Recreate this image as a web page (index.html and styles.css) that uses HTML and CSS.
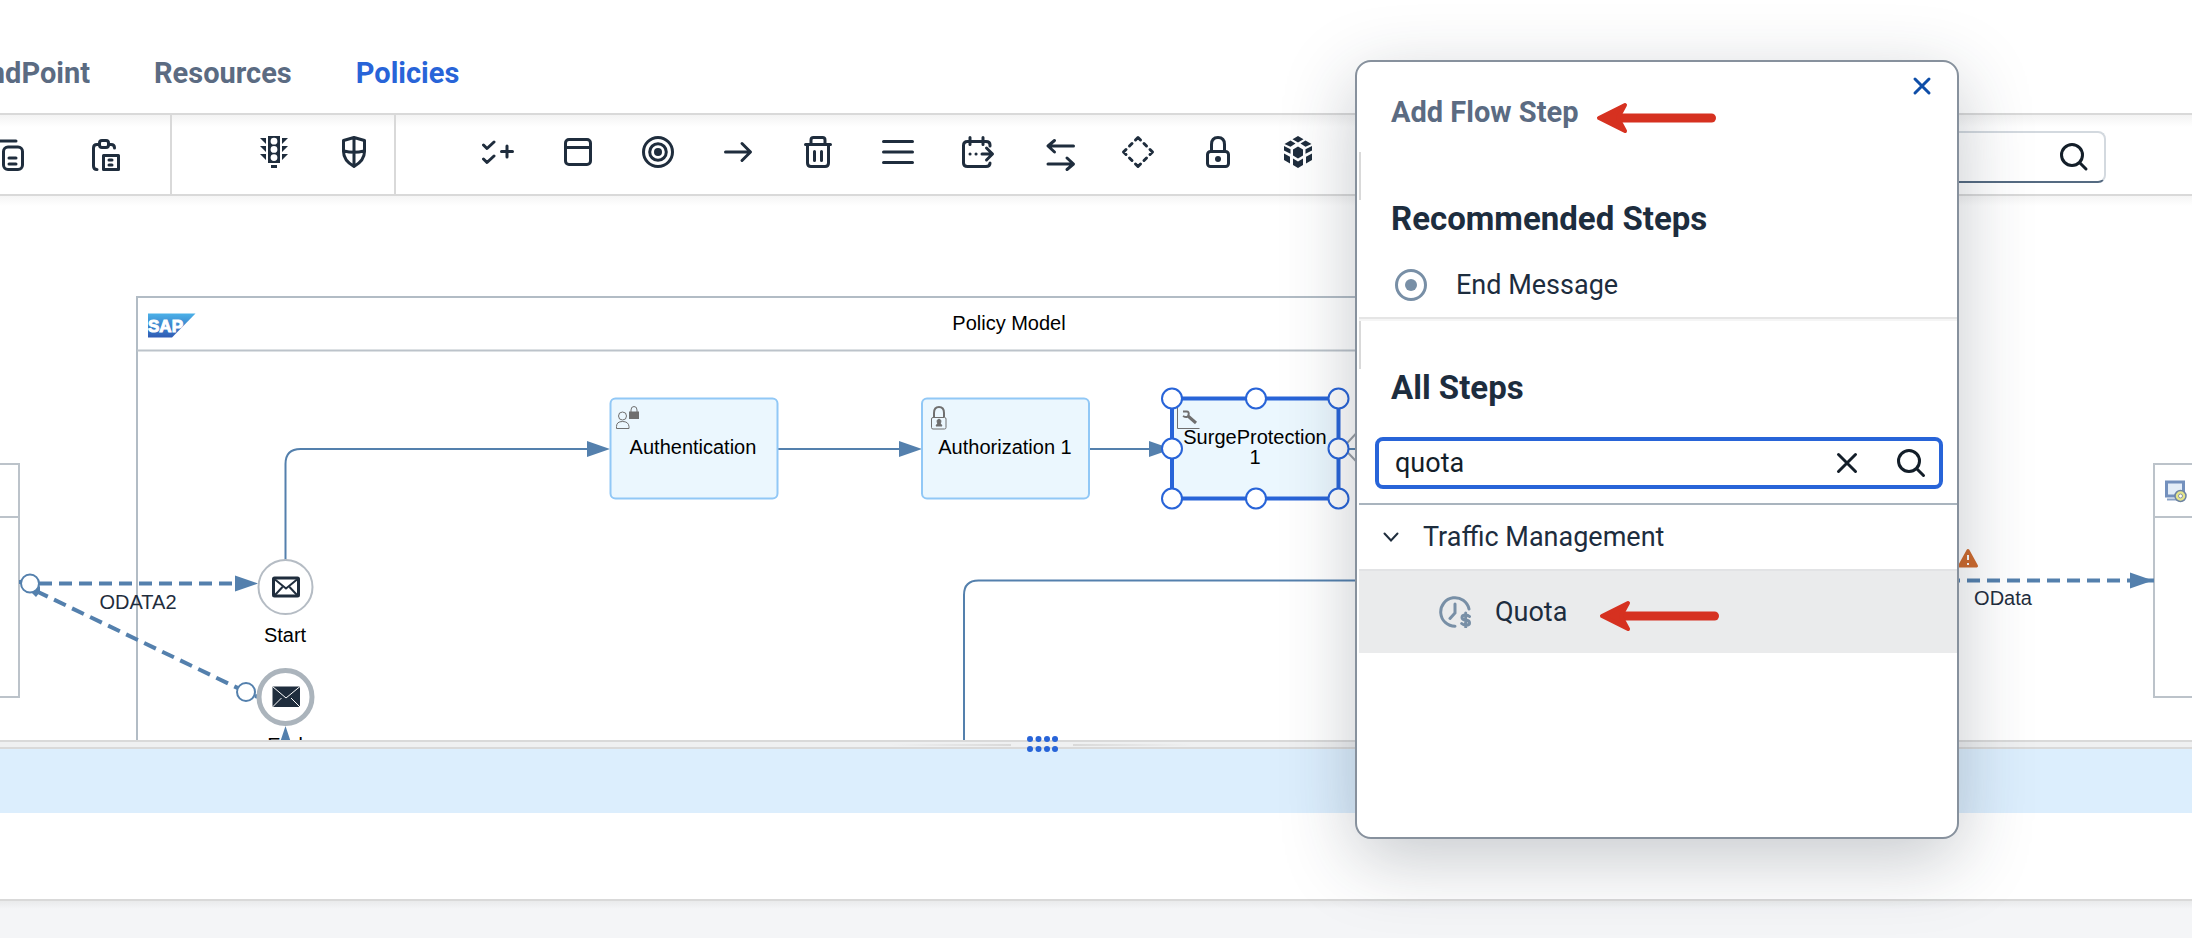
FILE: index.html
```html
<!DOCTYPE html>
<html lang="en">
<head>
<meta charset="utf-8">
<title>Policy Editor</title>
<link rel="stylesheet" href="styles.css">
</head>
<body>
<div class="app">
  <nav class="tabs" aria-label="Sections">
    <a class="tab tab-clipped" href="#endpoint"><span>EndPoint</span></a>
    <a class="tab" href="#resources">Resources</a>
    <a class="tab tab-active" href="#policies" aria-current="page">Policies</a>
  </nav>

  <div class="toolbar" role="toolbar" aria-label="Flow tools">
    <div class="group group-clipboard">
      <button class="tool" aria-label="Copy"><svg viewBox="0 0 32 32"><path d="M2 13V7q0-5 5-5h17"/><rect x="11.500" y="8" width="19" height="22.500" rx="4.500"/><path d="M17 19h7M17 25h7"/></svg></button>
      <button class="tool" aria-label="Paste"><svg viewBox="0 0 32 32"><path d="M7 30.500q-3.500 0-3.500-3.500V9q0-3.500 3.500-3.500h2M19 5.500h2q3.500 0 3.500 3.500"/><rect x="9.500" y="1.500" width="9" height="7" rx="2.500"/><path d="M13.500 16.500h15v14h-15zM19 21h3M19 26h3"/></svg></button>
    </div>
    <div class="group">
      <button class="tool" aria-label="Traffic policies"><svg class="fill" viewBox="0 0 32 32"><path fill-rule="evenodd" d="M10 0h12v27H10zM16 1.800a3.400 3.400 0 1 0 0 6.800a3.400 3.400 0 1 0 0-6.800M16 10a3.400 3.400 0 1 0 0 6.800a3.400 3.400 0 1 0 0-6.800M16 18.200a3.400 3.400 0 1 0 0 6.800a3.400 3.400 0 1 0 0-6.800M2 2h6v6zM2 10h6v6zM2 18h6v6zM30 2h-6v6zM30 10h-6v6zM30 18h-6v6zM13 29h6v3h-6z"/></svg></button>
      <button class="tool" aria-label="Security policies"><svg viewBox="0 0 32 32"><path d="M16 1.500l10.500 3v11q0 9-10.500 15q-10.500-6-10.500-15v-11zM16 2v28M6 15q10 2.500 20 0"/></svg></button>
    </div>
    <div class="group group-steps">
      <button class="tool" aria-label="Add checks"><svg viewBox="0 0 32 32"><path d="M1.500 9L5 12.500 12 6M1.500 23L5 26.500 12 20M19.500 15.500h11M25 10v11"/></svg></button>
      <button class="tool" aria-label="Pool"><svg viewBox="0 0 32 32"><rect x="3.500" y="3.500" width="25" height="25" rx="3.500"/><path d="M4 11.500h24"/></svg></button>
      <button class="tool" aria-label="Event"><svg viewBox="0 0 32 32"><circle cx="16" cy="16" r="14.500"/><circle cx="16" cy="16" r="8.300"/><circle class="dot" cx="16" cy="16" r="4"/></svg></button>
      <button class="tool" aria-label="Connector"><svg viewBox="0 0 32 32"><path d="M3.500 16h24M20 7.500l8.500 8.500-8.500 8.500"/></svg></button>
      <button class="tool" aria-label="Delete"><svg viewBox="0 0 32 32"><path d="M3.500 8.500h25M9 8.500V4q0-2.500 2.500-2.500h9q2.500 0 2.500 2.500v4.500M5.500 9v18q0 3.500 3.500 3.500h14q3.500 0 3.500-3.500V9M12.500 15.500v9M19.500 15.500v9"/></svg></button>
      <button class="tool" aria-label="List"><svg viewBox="0 0 32 32"><path d="M1.500 5.500h29M1.500 16h29M1.500 26.500h29"/></svg></button>
      <button class="tool" aria-label="Schedule"><svg viewBox="0 0 32 32"><path d="M28 10v-1q0-3.500-4-3.500H5.500q-4 0-4 4V27q0 3.500 4 3.500H24q4 0 4-3.500M8 1.500v7M21 1.500v7M8 18h.1M14 18h.1M20 18h10M24.500 12l6 6-6 6"/></svg></button>
      <button class="tool" aria-label="Exchange"><svg viewBox="0 0 32 32"><path d="M31.500 10H6.500M12.500 4.500L6 10l6.500 6M6 28h25M25 22l6.500 6-6.500 5.500"/></svg></button>
      <button class="tool" aria-label="Gateway"><svg viewBox="0 0 32 32"><path d="M13.500 4L16 1.500 18.500 4M28 13.500l2.500 2.500-2.500 2.500M18.500 28L16 30.500 13.500 28M4 18.500L1.500 16 4 13.500M10 7.500L7.500 10M22 7.500l2.500 2.500M22 24.500l2.500-2.500M10 24.500L7.500 22"/></svg></button>
      <button class="tool" aria-label="Lock"><svg viewBox="0 0 32 32"><rect x="5.500" y="15.500" width="21" height="15" rx="3"/><path d="M9.500 15V8.500q0-7 6.500-7t6.500 7V15"/><circle class="dot" cx="16" cy="23" r="3"/></svg></button>
      <button class="tool" aria-label="Integration"><svg class="fill" viewBox="0 0 32 32"><path d="M16 0l5.500 3.200L16 6.500 10.500 3.200zM8.500 4.500l5 3-5 3.200L2.500 8zM23.500 4.500l-5 3 5 3.200L29.500 8zM16 10.500l5 3v6L16 22.500l-5-3v-6zM2 10l6.500 3.200v4.500L2 14.500zM30 10l-6.500 3.200v4.500L30 14.500zM2 17.500l6 3.200v6.800L2 24zM30 17.500l-6 3.200v6.800L30 24zM11 22.500l5 3 5-3v6.500L16 32l-5-3z"/></svg></button>
    </div>
    <label class="search">
      <input type="search" aria-label="Search">
      <svg viewBox="0 0 32 32"><circle cx="14" cy="14" r="10.500"/><path d="M22 22l6 6"/></svg>
    </label>
  </div>

  <main class="canvas">
    <svg class="diagram" role="img" aria-label="Policy flow diagram">
      <defs>
        <linearGradient id="logo" x1="0" y1="0" x2="0" y2="1"><stop offset="0" stop-color="#4bb1e8"/><stop offset="1" stop-color="#2f5bb4"/></linearGradient>
      </defs>
      <g transform="translate(0 -196)">
        <g class="pool">
          <path d="M0 464H19V697H0M0 517H19"/>
          <path d="M2300 464H2154V697H2300M2154 517H2300"/>
          <path class="pool-main" d="M137 760V297H1900V760"/><path d="M137 350.500H1900"/>
        </g>
        <path fill="url(#logo)" d="M148 313.500h47.500L172 337.500H148z"/>
        <text class="logo-text" x="165.500" y="332">SAP</text>
        <text x="1009" y="330">Policy Model</text>

        <g class="flow">
          <path d="M285.500 560V464q0-15 15-15H590M778 449H900M1089 449H1150M1345 449h20M964 760V595q0-14.500 14.500-14.500H1400"/>
          <path class="dashed" d="M39 583.500H238"/>
          <path class="dashed" d="M246 692L34 590"/>
          <path class="dashed" d="M1947 580.500H2132"/>
          <path class="solid" d="M19 582l4 0M255 696l4 1M2146 580.500h8"/>
        </g>
        <g class="head">
          <path d="M587 441l23 8-23 8zM899 441l23 8-23 8zM1149 441l23 8-23 8zM235 575.500l23 8-23 8zM2130 572.500l23 8-23 8zM285.500 726l-8 24h16zM31 592l9-6v6l-4 5z"/>
        </g>
        <circle class="port" cx="30" cy="583.500" r="9"/>
        <circle class="port" cx="246" cy="692" r="9"/>

        <circle class="event" cx="285.500" cy="587" r="27"/>
        <g class="envelope"><rect x="273.500" y="578" width="25" height="18" rx="1"/><path d="M275 579.500l11 9 11-9M275 595l7.500-8M297 595l-7.500-8"/></g>
        <circle class="event event-end" cx="285.500" cy="697" r="26.500"/>
        <g class="envelope-full"><rect x="272.500" y="686.500" width="27.500" height="20.500"/><path d="M272.500 686.500l13.500 11.500 14-11.500M272.500 707l9-9M300 707l-9-9"/></g>
        <text x="285" y="642">Start</text>
        <text x="285" y="752">End</text>
        <text class="link-label" x="138" y="609">ODATA2</text>
        <text class="link-label" x="2003" y="605">OData</text>

        <rect class="step" x="610.500" y="398.500" width="167" height="100" rx="5"/>
        <g class="glyph"><circle cx="622.500" cy="416" r="4"/><path d="M616.500 428.500v-2q0-5 6-5t6.500 5v2z"/><path d="M631 412v-2q0-3.500 3-3.500t3 3.500v2"/><rect class="glyph-fill" x="629.500" y="412" width="9" height="6.500"/></g>
        <text x="693" y="454">Authentication</text>

        <rect class="step" x="922" y="398.500" width="167" height="100" rx="5"/>
        <g class="glyph"><rect x="931.500" y="417.500" width="14.500" height="11.500" rx="1.500"/><path class="glyph-thick" d="M934 417v-4q0-6 5-6t5 6v4"/><path class="glyph-fill" d="M936 426h6l-1.500-2.500 .5-3-2-1.500-2 1.500 .5 3z"/></g>
        <text x="1005" y="454">Authorization 1</text>

        <path class="gateway" d="M1363 426l-20 21.500 20 21"/>
        <rect class="step selected" x="1172" y="398.500" width="166.500" height="100"/>
        <g class="glyph"><path d="M1177.500 404v24.500h22"/><path class="glyph-wrench" d="M1188 416l8 7"/><path class="glyph-thick" d="M1183 411.500h3.500q3 0 2 3.500t-5.500 1"/></g>
        <text x="1255" y="444">SurgeProtection</text>
        <text x="1255" y="464">1</text>
        <g class="handle"><circle cx="1172" cy="398.500" r="10"/><circle cx="1256" cy="398.500" r="10"/><circle cx="1338.500" cy="398.500" r="10"/><circle cx="1172" cy="448.500" r="10"/><circle cx="1338.500" cy="448.500" r="10"/><circle cx="1172" cy="498.500" r="10"/><circle cx="1256" cy="498.500" r="10"/><circle cx="1338.500" cy="498.500" r="10"/></g>

        <path class="warning" d="M1968 550.500l8.500 15.500h-17z"/><path class="warning-mark" d="M1968 555v5M1968 563v2"/>
        <g><rect x="2166.500" y="482" width="17" height="14" fill="#e3edf8" stroke="#7390bd" stroke-width="3"/><path d="M2167 499.500h10" stroke="#8ba3c6" stroke-width="2"/><circle cx="2180.500" cy="496" r="5.500" fill="#e6e58a" stroke="#6d83a3" stroke-width="1.500"/><circle cx="2180.500" cy="496" r="2" fill="#fff" stroke="#8794a5"/></g>
      </g>
    </svg>
  </main>

  <div class="splitter" role="separator">
    <span class="rail rail-left"></span>
    <svg class="grip" viewBox="0 0 30 18"><path d="M3 3h.01M11.500 3h.01M20 3h.01M28 3h.01M3 13h.01M11.500 13h.01M20 13h.01M28 13h.01"/></svg>
    <span class="rail"></span>
  </div>
  <div class="panel-head"></div>
  <div class="panel-body"></div>
  <footer class="foot"></footer>
</div>

<section class="dialog" role="dialog" aria-labelledby="dialog-title">
  <button class="close" aria-label="Close"><svg viewBox="0 0 20 20"><path d="M3 3l14 14M17 3L3 17"/></svg></button>
  <header class="dialog-head">
    <h2 id="dialog-title">Add Flow Step</h2>
    <svg class="pointer" viewBox="0 0 120 32"><path d="M115.500 16H16" /><path class="tip" d="M29 3L3 16l26 13-7-13z"/></svg>
  </header>
  <div class="section section-recommended">
    <h3>Recommended Steps</h3>
    <button class="step-row">
      <svg class="step-icon" viewBox="0 0 32 32"><circle cx="16" cy="16" r="14.500"/><circle class="step-dot" cx="16" cy="16" r="6"/></svg>
      <span>End Message</span>
    </button>
  </div>
  <div class="section section-all">
    <h3>All Steps</h3>
  </div>
  <div class="filter-wrap">
    <div class="filter">
      <input type="text" value="quota" aria-label="Filter steps">
      <button aria-label="Clear"><svg viewBox="0 0 32 32"><path d="M7.500 7.500l17 17M24.500 7.500l-17 17"/></svg></button>
      <button aria-label="Search"><svg viewBox="0 0 32 32"><circle cx="14" cy="14" r="10.500"/><path d="M22 22l6.500 6.500"/></svg></button>
    </div>
  </div>
  <button class="category" aria-expanded="true">
    <svg viewBox="0 0 16 16"><path d="M1.500 4.500L8 11.500l6.500-7"/></svg>
    <span>Traffic Management</span>
  </button>
  <button class="result">
    <svg class="step-icon" viewBox="0 0 32 32"><path d="M30 13A14.300 14.300 0 1 0 16 30.300M16 8v9l-5 5.500"/><path d="M30.500 20.500q-1.500-1.500-4-1.500-3.500 0-3.500 2.500 0 2.200 3.700 2.600t3.800 2.800q0 2.300-3.600 2.300-2.500 0-4.200-1.700M26.700 17v14"/></svg>
    <span>Quota</span>
    <svg class="pointer" viewBox="0 0 120 32"><path d="M115.500 16H16"/><path class="tip" d="M29 3L3 16l26 13-7-13z"/></svg>
  </button>
</section>
</body>
</html>
```
FILE: styles.css
```css
* { box-sizing: border-box; }
body { margin: 0; background: #fff; color: #1d2d3e; font-family: Roboto, sans-serif; font-size: 27px; overflow: hidden; }
button { border: 0; padding: 0; background: none; color: inherit; font: inherit; text-align: left; }
svg { display: block; }
h2, h3 { margin: 0; }

.app { display: flex; flex-direction: column; height: 100vh; overflow: hidden; }

.tabs { flex: none; display: flex; gap: 64px; align-items: center; height: 115px; padding-top: 32px; border-bottom: 2px solid #d9d9d9; font-size: 29px; font-weight: 700; background: #fff; }
.tab { color: #5b6b82; text-decoration: none; }
.tab-clipped { display: flex; justify-content: flex-end; width: 90px; overflow: hidden; }
.tab-active { color: #2864d8; }

.toolbar { flex: none; display: flex; height: 81px; border-bottom: 2px solid #d9d9d9; background: linear-gradient(#f3f3f3, #fff 12px); }
.group { display: flex; gap: 48px; padding: 21px 24px 0 86px; border-right: 2px solid #d9d9d9; }
.group-clipboard { flex: 0 0 172px; gap: 66px; justify-content: flex-end; padding: 24px 48px 0 0; overflow: hidden; }
.group-steps { border-right: 0; }
.tool { flex: none; width: 32px; height: 32px; }
.tool svg { width: 32px; height: 32px; overflow: visible; fill: none; stroke: #1f2d3d; stroke-width: 3; stroke-linecap: round; stroke-linejoin: round; }
.tool .fill { fill: #1f2d3d; stroke: none; }
.tool .dot { fill: #1f2d3d; stroke: none; }
.search { display: flex; align-items: center; width: 320px; height: 52px; margin: 16px 86px 0 auto; padding-right: 14px; border: 2px solid #d3d9df; border-bottom-color: #556b82; border-radius: 8px; }
.search input { flex: 1; min-width: 0; border: 0; background: none; font: inherit; outline: 0; }
.search svg { width: 32px; height: 32px; fill: none; stroke: #131e29; stroke-width: 3; stroke-linecap: round; }

.canvas { flex: 1; min-height: 0; overflow: hidden; background: linear-gradient(#f5f5f5, #fff 10px); }
.diagram { width: 100%; height: 100%; font: 20px "Liberation Sans", Arial, sans-serif; }
.diagram text { text-anchor: middle; fill: #000; }
.diagram .link-label { fill: #1f2d3d; }
.diagram .logo-text { fill: #fff; stroke: #fff; stroke-width: 1; font-size: 17px; font-weight: 700; }
.pool path { fill: none; stroke: #bcc3ca; stroke-width: 2; }
.pool .pool-main { stroke: #b2bcc5; }
.flow path { fill: none; stroke: #5480ad; stroke-width: 2; }
.flow .dashed { stroke-width: 4; stroke-dasharray: 13 7; }
.flow .solid { stroke-width: 4; }
.head { fill: #5480ad; }
.port { fill: #fff; stroke: #5480ad; stroke-width: 2; }
.event { fill: #fff; stroke: #b5bcc4; stroke-width: 2; }
.event-end { stroke: #abb4bc; stroke-width: 5; }
.envelope { fill: none; stroke: #1f2d3d; stroke-width: 2; }
.envelope rect { stroke-width: 3; }
.envelope-full rect { fill: #1f2d3d; }
.envelope-full path { fill: none; stroke: #fff; stroke-width: 1; }
.step { fill: #ebf7fe; stroke: #91c8f6; stroke-width: 2; }
.selected { stroke: #2864d8; stroke-width: 4; }
.handle { fill: #fff; stroke: #2864d8; stroke-width: 2; }
.glyph { fill: none; stroke: #6f6f6f; stroke-width: 1; }
.glyph .glyph-fill { fill: #6f6f6f; }
.glyph .glyph-thick { stroke-width: 2; }
.glyph .glyph-wrench { stroke-width: 3; }
.gateway { fill: none; stroke: #9a9fa5; stroke-width: 2; }
.warning { fill: #cf6a2c; stroke: #cf6a2c; stroke-width: 3; stroke-linejoin: round; }
.warning-mark { stroke: #fff; stroke-width: 2; }

.splitter { flex: none; display: flex; justify-content: center; align-items: center; gap: 16px; height: 9px; padding-right: 108px; border: solid #d9d9d9; border-width: 2px 0; background: #eff0f1; }
.rail { width: 120px; height: 2px; background: linear-gradient(90deg, #d9d9d9, #eff0f1); }
.rail-left { background: linear-gradient(90deg, #eff0f1, #d9d9d9); }
.grip { position: relative; flex: none; width: 30px; height: 18px; fill: none; stroke: #2864d8; stroke-width: 6; stroke-linecap: round; overflow: visible; }
.panel-head { flex: none; height: 64px; background: #dceefd; }
.panel-body { flex: none; height: 88px; border-bottom: 2px solid #d9d9d9; background: #fff; }
.foot { flex: none; height: 37px; background: linear-gradient(#e9eaeb, #f4f5f7 8px); }

.dialog { position: absolute; top: 60px; right: 233px; width: 604px; min-height: 779px; padding: 0 0 0 2px; border: 2px solid #87919d; border-radius: 16px; background: #fff; box-shadow: 0 20px 72px rgba(34, 46, 62, .26); }
.close { position: absolute; top: 14px; right: 25px; width: 20px; height: 20px; }
.close svg { width: 20px; height: 20px; fill: none; stroke: #0f4ea8; stroke-width: 3; stroke-linecap: round; }
.dialog-head { display: flex; align-items: center; gap: 18px; height: 90px; padding: 10px 32px 0; }
.dialog-head h2 { font-size: 29px; font-weight: 700; color: #5b6b82; }
.pointer { flex: none; width: 120px; height: 32px; fill: none; stroke: #d63120; stroke-width: 9; stroke-linecap: round; }
.pointer .tip { fill: #d63120; stroke-width: 4; stroke-linejoin: round; }
.dialog-head .pointer { margin-top: 12px; }
.section { padding: 0 32px; }
.section h3 { display: flex; align-items: center; height: 48px; margin-top: -6px; font-size: 33px; font-weight: 700; }
.section::before { content: ""; display: block; width: 2px; height: 48px; margin-left: -32px; background: #d9d9d9; }
.section-recommended { border-bottom: 2px solid #e5e5e5; }
.section-all { border-top: 2px solid #f5f5f5; }
.step-row { display: flex; align-items: center; gap: 29px; width: 100%; height: 65px; margin-top: 10px; padding: 0 0 0 4px; }
.step-icon { flex: none; width: 32px; height: 32px; fill: none; stroke: #788fa6; stroke-width: 3; stroke-linecap: round; }
.step-icon .step-dot { fill: #788fa6; stroke: none; }
.filter-wrap { padding: 26px 14px 14px 16px; border-bottom: 2px solid #a9b4be; }
.filter { display: flex; align-items: center; gap: 32px; height: 52px; padding: 0 12px 0 16px; border: 4px solid #2864d8; border-radius: 8px; }
.filter input { flex: 1; min-width: 0; padding: 0; border: 0; outline: 0; background: none; color: #131e29; font: inherit; }
.filter svg { width: 32px; height: 32px; fill: none; stroke: #131e29; stroke-width: 3; stroke-linecap: round; }
.category { display: flex; align-items: center; gap: 24px; width: 100%; height: 66px; padding: 0 24px; border-bottom: 2px solid #e2e3e5; }
.category svg { width: 16px; height: 16px; fill: none; stroke: #1f2d3d; stroke-width: 2; stroke-linecap: round; }
.result { display: flex; align-items: center; gap: 24px; width: 100%; height: 82px; padding: 0 80px; background: #eaebec; }
.result .pointer { margin: 8px 0 0 8px; }
```
